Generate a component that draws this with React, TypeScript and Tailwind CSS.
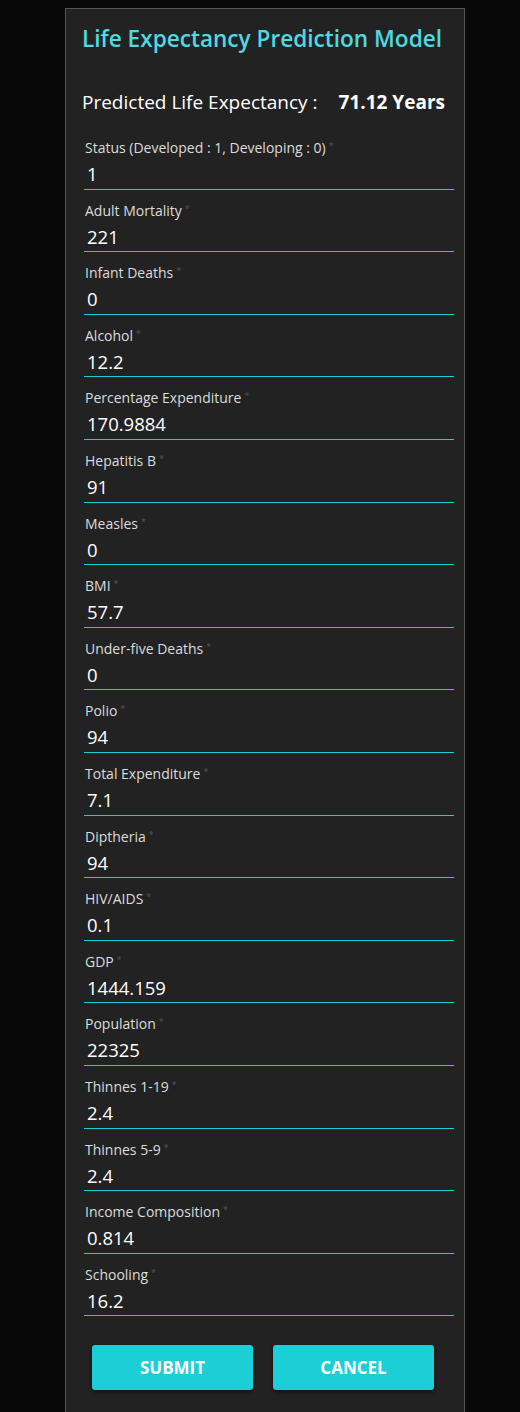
import React, { useState } from "react";

const initialFields = [
  { label: "Status (Developed : 1, Developing : 0)", value: "1" },
  { label: "Adult Mortality", value: "221" },
  { label: "Infant Deaths", value: "0" },
  { label: "Alcohol", value: "12.2" },
  { label: "Percentage Expenditure", value: "170.9884" },
  { label: "Hepatitis B", value: "91" },
  { label: "Measles", value: "0" },
  { label: "BMI", value: "57.7" },
  { label: "Under-five Deaths", value: "0" },
  { label: "Polio", value: "94" },
  { label: "Total Expenditure", value: "7.1" },
  { label: "Diptheria", value: "94" },
  { label: "HIV/AIDS", value: "0.1" },
  { label: "GDP", value: "1444.159" },
  { label: "Population", value: "22325" },
  { label: "Thinnes 1-19", value: "2.4" },
  { label: "Thinnes 5-9", value: "2.4" },
  { label: "Income Composition", value: "0.814" },
  { label: "Schooling", value: "16.2" },
];

const App = () => {
  const [fields, setFields] = useState(initialFields);

  const handleChange = (index: number, value: string) => {
    const next = [...fields];
    next[index] = { ...next[index], value };
    setFields(next);
  };

  return (
    <div
      className="min-h-screen bg-[#080808] pt-2"
      style={{ fontFamily: '"Open Sans", "Noto Sans", sans-serif' }}
    >
      <div className="ml-[65px] w-[400px] min-h-[1404px] border border-[#555] border-b-0 bg-[#222]">
        <h1 className="pt-[15px] pr-[6px] text-center text-[22.6px] font-semibold leading-[30px] text-[#4fd9e2]">
          Life Expectancy Prediction Model
        </h1>

        <div className="mt-[35px] flex items-center pl-[16px] text-[19px] leading-[26px] text-white">
          <span>Predicted Life Expectancy :</span>
          <span className="ml-[21px] font-bold">71.12 Years</span>
        </div>

        <form className="mt-[12px] pl-[18px] pr-[10px]" onSubmit={(e) => e.preventDefault()}>
          {fields.map((field, index) => (
            <div
              key={field.label}
              className="flex h-[62.6px] flex-col border-b border-[#1ccfd6] pt-[12px]"
            >
              <label className="pl-[1px] text-[14px] leading-[18px] text-[#dcdcdc]">
                {field.label}
                <span className="relative -top-[4px] ml-[3px] text-[9px] text-[#555]">*</span>
              </label>
              <input
                type="text"
                value={field.value}
                onChange={(e) => handleChange(index, e.target.value)}
                className="mt-[3px] w-full bg-transparent pl-[3px] text-[18.5px] leading-[24px] text-white outline-none"
              />
            </div>
          ))}
        </form>

        <div className="mt-[29px] flex gap-[20px] pl-[26px]">
          <button className="h-[45px] w-[161px] rounded-[3px] bg-[#1ccfd6] text-[17px] font-bold text-white shadow-[0_2px_4px_rgba(0,0,0,0.5)]">
            SUBMIT
          </button>
          <button className="h-[45px] w-[161px] rounded-[3px] bg-[#1ccfd6] text-[17px] font-bold text-white shadow-[0_2px_4px_rgba(0,0,0,0.5)]">
            CANCEL
          </button>
        </div>
      </div>
    </div>
  );
};

export default App;
